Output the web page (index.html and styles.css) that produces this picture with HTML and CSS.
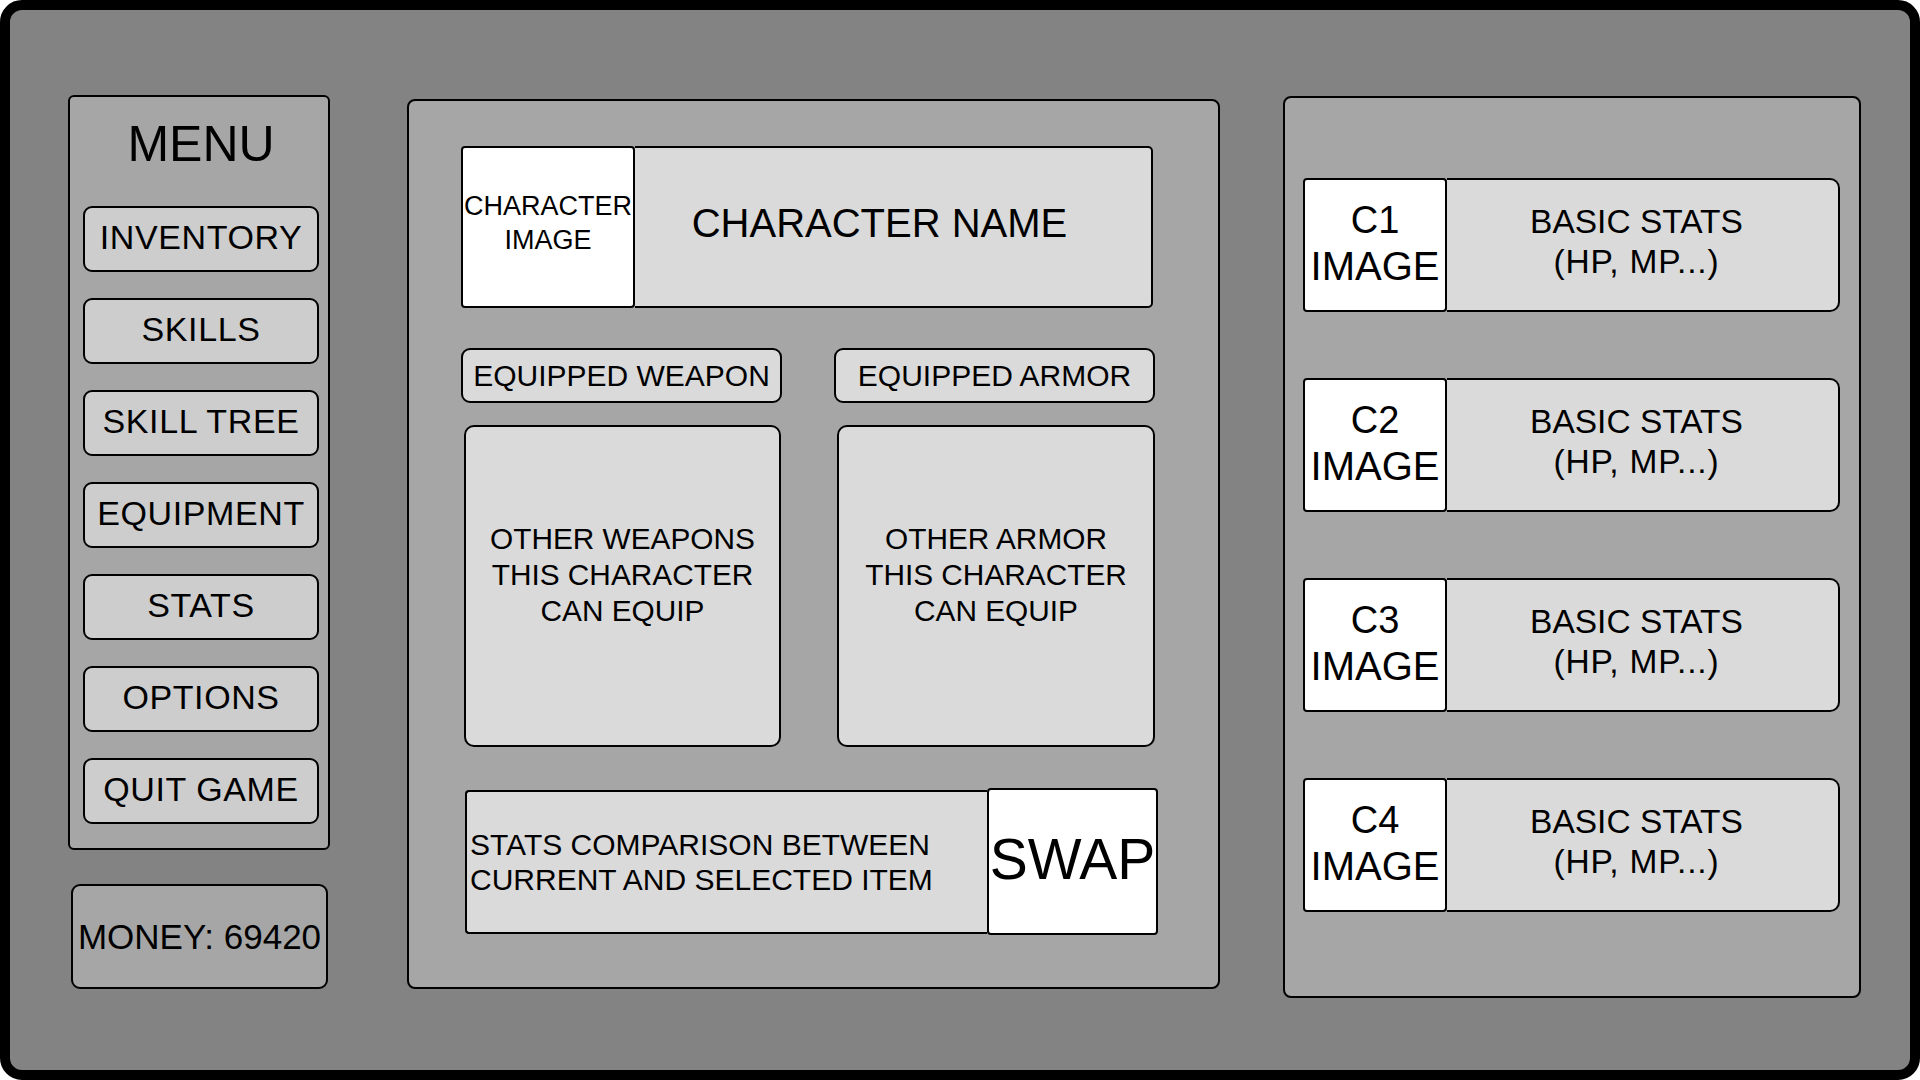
FILE: index.html
```html
<!DOCTYPE html>
<html lang="en">
<head>
<meta charset="utf-8">
<title>Equipment Menu</title>
<link rel="stylesheet" href="styles.css">
</head>
<body>
<div class="frame">
  <div class="col-left">
    <div class="menu">
      <div class="menu-title">MENU</div>
      <div class="menu-list">
        <div class="menu-btn">INVENTORY</div>
        <div class="menu-btn">SKILLS</div>
        <div class="menu-btn">SKILL TREE</div>
        <div class="menu-btn">EQUIPMENT</div>
        <div class="menu-btn">STATS</div>
        <div class="menu-btn">OPTIONS</div>
        <div class="menu-btn">QUIT GAME</div>
      </div>
    </div>
    <div class="money">MONEY: 69420</div>
  </div>

  <div class="col-mid">
    <div class="char-header">
      <div class="char-image"><div>CHARACTER<br>IMAGE</div></div>
      <div class="char-name">CHARACTER NAME</div>
    </div>
    <div class="equip-grid">
      <div class="equip-label">EQUIPPED WEAPON</div>
      <div class="equip-label">EQUIPPED ARMOR</div>
      <div class="equip-box"><div>OTHER WEAPONS<br>THIS CHARACTER<br>CAN EQUIP</div></div>
      <div class="equip-box"><div>OTHER ARMOR<br>THIS CHARACTER<br>CAN EQUIP</div></div>
    </div>
    <div class="compare-row">
      <div class="compare"><div>STATS COMPARISON BETWEEN<br>CURRENT AND SELECTED ITEM</div></div>
      <div class="swap">SWAP</div>
    </div>
  </div>

  <div class="col-right">
    <div class="party-card">
      <div class="party-img"><div class="pi-c">C1</div><div class="pi-i">IMAGE</div></div>
      <div class="party-stats"><div class="ps-main">BASIC STATS</div><div class="ps-sub">(HP, MP...)</div></div>
    </div>
    <div class="party-card">
      <div class="party-img"><div class="pi-c">C2</div><div class="pi-i">IMAGE</div></div>
      <div class="party-stats"><div class="ps-main">BASIC STATS</div><div class="ps-sub">(HP, MP...)</div></div>
    </div>
    <div class="party-card">
      <div class="party-img"><div class="pi-c">C3</div><div class="pi-i">IMAGE</div></div>
      <div class="party-stats"><div class="ps-main">BASIC STATS</div><div class="ps-sub">(HP, MP...)</div></div>
    </div>
    <div class="party-card">
      <div class="party-img"><div class="pi-c">C4</div><div class="pi-i">IMAGE</div></div>
      <div class="party-stats"><div class="ps-main">BASIC STATS</div><div class="ps-sub">(HP, MP...)</div></div>
    </div>
  </div>
</div>
</body>
</html>
```

FILE: styles.css
```css
* { box-sizing: border-box; }

html, body {
  margin: 0;
  padding: 0;
  background: #ffffff;
}

body {
  font-family: "Liberation Sans", Arial, Helvetica, sans-serif;
  color: #000;
  width: 1920px;
  height: 1080px;
  overflow: hidden;
}

.frame {
  width: 1920px;
  height: 1080px;
  border: 10px solid #000;
  border-radius: 22px;
  background: #838383;
  display: flex;
  align-items: flex-start;
  padding: 85px 0 0 58px;
}

/* ---------- left column ---------- */
.col-left {
  width: 262px;
  display: flex;
  flex-direction: column;
  gap: 34px;
}

.menu {
  background: #a6a6a6;
  border: 2px solid #000;
  border-radius: 6px;
  padding: 17px 9px 24px 13px;
}

.menu-title {
  font-size: 50px;
  line-height: 60px;
  text-align: center;
  margin-bottom: 32px;
}

.menu-list {
  display: flex;
  flex-direction: column;
  gap: 26px;
}

.menu-btn {
  height: 66px;
  background: #cdcdcd;
  border: 2px solid #000;
  border-radius: 9px;
  display: flex;
  align-items: center;
  justify-content: center;
  font-size: 34px;
  letter-spacing: 0.6px;
  padding-bottom: 4px;
  white-space: nowrap;
}

.money {
  margin: 0 2px 0 3px;
  height: 105px;
  background: #a6a6a6;
  border: 2px solid #000;
  border-radius: 9px;
  display: flex;
  align-items: center;
  justify-content: center;
  font-size: 35px;
  white-space: nowrap;
}

/* ---------- middle column ---------- */
.col-mid {
  margin-left: 77px;
  margin-top: 4px;
  width: 813px;
  height: 890px;
  background: #a6a6a6;
  border: 2px solid #000;
  border-radius: 8px;
  padding: 45px 63px 0 52px;
  display: flex;
  flex-direction: column;
}

.char-header {
  display: flex;
  height: 162px;
  margin-right: 2px;
}

.char-image {
  width: 174px;
  background: #fff;
  border: 2px solid #000;
  border-radius: 4px;
  display: flex;
  align-items: center;
  justify-content: center;
  text-align: center;
  font-size: 27px;
  line-height: 33.6px;
  padding-bottom: 6px;
  white-space: nowrap;
}

.char-name {
  flex: 1;
  background: #dadada;
  border: 2px solid #000;
  border-left: none;
  border-radius: 0 5px 5px 0;
  display: flex;
  align-items: center;
  justify-content: center;
  font-size: 40px;
  padding-right: 27px;
  padding-bottom: 8px;
}

.equip-grid {
  margin-top: 40px;
  display: grid;
  grid-template-columns: 321px 321px;
  column-gap: 52px;
  row-gap: 22px;
  grid-template-rows: 55px 322px;
}

.equip-label {
  background: #dadada;
  border: 2px solid #000;
  border-radius: 9px;
  display: flex;
  align-items: center;
  justify-content: center;
  font-size: 30px;
  white-space: nowrap;
}

.equip-box {
  margin-left: 3px;
  background: #dadada;
  border: 2px solid #000;
  border-radius: 10px;
  display: flex;
  align-items: center;
  justify-content: center;
  text-align: center;
  font-size: 29.8px;
  line-height: 36px;
  padding-bottom: 22px;
}

.equip-box:nth-child(3) { margin-right: 1px; }

.compare-row {
  margin-top: 41px;
  margin-left: 4px;
  margin-right: -3px;
  display: flex;
  align-items: center;
}

.compare {
  flex: 1;
  height: 144px;
  background: #dadada;
  border: 2px solid #000;
  border-right: none;
  border-radius: 4px 0 0 4px;
  display: flex;
  align-items: center;
  padding-left: 3px;
  font-size: 30px;
  line-height: 35px;
  white-space: nowrap;
}

.swap {
  width: 171px;
  height: 147px;
  background: #fff;
  border: 2px solid #000;
  border-radius: 4px;
  display: flex;
  align-items: center;
  justify-content: center;
  font-size: 57px;
  padding-bottom: 5px;
}

/* ---------- right column ---------- */
.col-right {
  margin-left: 63px;
  margin-top: 1px;
  width: 578px;
  height: 902px;
  background: #a6a6a6;
  border: 2px solid #000;
  border-radius: 8px;
  padding: 80px 19px 0 18px;
  display: flex;
  flex-direction: column;
  gap: 66px;
}

.party-card {
  display: flex;
  height: 134px;
}

.party-img {
  width: 144px;
  background: #fff;
  border: 2px solid #000;
  border-radius: 4px;
  display: flex;
  flex-direction: column;
  align-items: center;
  justify-content: center;
  text-align: center;
  padding-bottom: 5px;
}

.pi-c {
  font-size: 38px;
  line-height: 46px;
}

.pi-i {
  font-size: 40px;
  line-height: 46px;
}

.party-stats {
  flex: 1;
  background: #dadada;
  border: 2px solid #000;
  border-left: none;
  border-radius: 0 10px 10px 0;
  display: flex;
  flex-direction: column;
  align-items: center;
  justify-content: center;
  text-align: center;
  font-size: 33.5px;
  line-height: 40px;
  padding-right: 12px;
  padding-bottom: 6px;
}

.ps-sub {
  letter-spacing: 0.8px;
}
```
